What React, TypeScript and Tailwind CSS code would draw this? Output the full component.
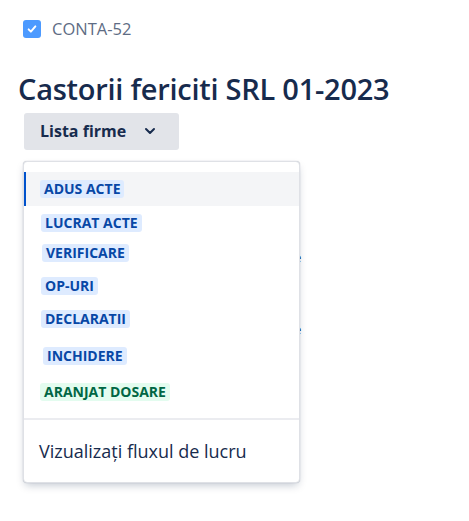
import { ChevronDown } from "lucide-react";

const statuses = [
  { label: "ADUS ACTE", h: "h-[34px]", ml: "ml-[14px]", tone: "blue", active: true },
  { label: "LUCRAT ACTE", h: "h-[33px]", ml: "ml-[15px]", tone: "blue" },
  { label: "VERIFICARE", h: "h-[27px]", ml: "ml-[16px]", tone: "blue" },
  { label: "OP-URI", h: "h-[40px]", ml: "ml-[15px]", tone: "blue" },
  { label: "DECLARATII", h: "h-[25px]", ml: "ml-[15px]", tone: "blue" },
  { label: "INCHIDERE", h: "h-[49px]", ml: "ml-[17px]", tone: "blue" },
  { label: "ARANJAT DOSARE", h: "h-[23px]", ml: "ml-[14px]", tone: "green" },
];

export default function App() {
  return (
    <div className="relative min-h-[521px] bg-white font-['Open_Sans',sans-serif] text-[#172b4d]">
      {/* issue key */}
      <div className="flex items-center gap-[11px] pl-[23px] pt-[17px]">
        <span className="flex h-[18px] w-[18px] items-center justify-center rounded-[3px] bg-[#4c9aff]">
          <svg viewBox="0 0 16 16" className="h-[12px] w-[12px]" fill="none" stroke="white" strokeWidth="2.6" strokeLinecap="round" strokeLinejoin="round">
            <path d="M3.5 8.5l3 3 6-7" />
          </svg>
        </span>
        <span className="text-[16.5px] text-[#5e6c84]">CONTA-52</span>
      </div>

      <h1 className="mt-[29px] pl-[18px] text-[29px] leading-[36px] font-semibold tracking-[-0.25px] text-[#172b4d]">
        Castorii fericiti SRL 01-2023
      </h1>

      <div className="pl-[24px] pt-[6px]">
        <button className="flex h-[37px] w-[155px] items-center rounded-[3px] bg-[#e2e4e9] pl-[16px] text-[16px] font-bold text-[#172b4d]">
          Lista firme
          <ChevronDown className="ml-[16px] h-[16px] w-[16px]" strokeWidth={3} />
        </button>
      </div>

      {/* page content peeking behind the menu */}
      <div className="pl-[294px] pt-[10px] text-[13px] leading-none">
        <div className="h-[83px] pt-[74px] text-[#172b4d]">:</div>
        <div className="h-[40px] pt-[8px] text-[#172b4d]">e</div>
        <div className="h-[40px] text-[#0052cc]">|</div>
        <div className="h-[63px] text-[#172b4d]">e</div>
        <div className="text-[#172b4d]">:</div>
      </div>

      {/* dropdown */}
      <div className="absolute left-[23px] top-[161px] w-[277px] rounded-[4px] border border-[#dfe1e6] bg-white shadow-[0_4px_8px_-2px_rgba(9,30,66,0.25),0_0_1px_rgba(9,30,66,0.31)]">
        <ul className="pt-[10px] pb-[15px]">
          {statuses.map((s) => (
            <li
              key={s.label}
              className={`flex items-center ${s.h} ${
                s.active ? "border-l-2 border-[#0052cc] bg-[#f4f5f7]" : "border-l-2 border-transparent"
              }`}
            >
              <span
                className={`${s.ml} rounded-[3px] px-[4px] text-[14px] leading-[18px] font-bold ${
                  s.tone === "green" ? "bg-[#e3fcef] text-[#006644]" : "bg-[#deebff] text-[#0747a6]"
                }`}
              >
                {s.label}
              </span>
            </li>
          ))}
        </ul>
        <div className="border-t-2 border-[#ebecf0]" />
        <div className="flex h-[62px] items-center pl-[15px] text-[18px] text-[#172b4d]">
          Vizualizați fluxul de lucru
        </div>
      </div>
    </div>
  );
}
